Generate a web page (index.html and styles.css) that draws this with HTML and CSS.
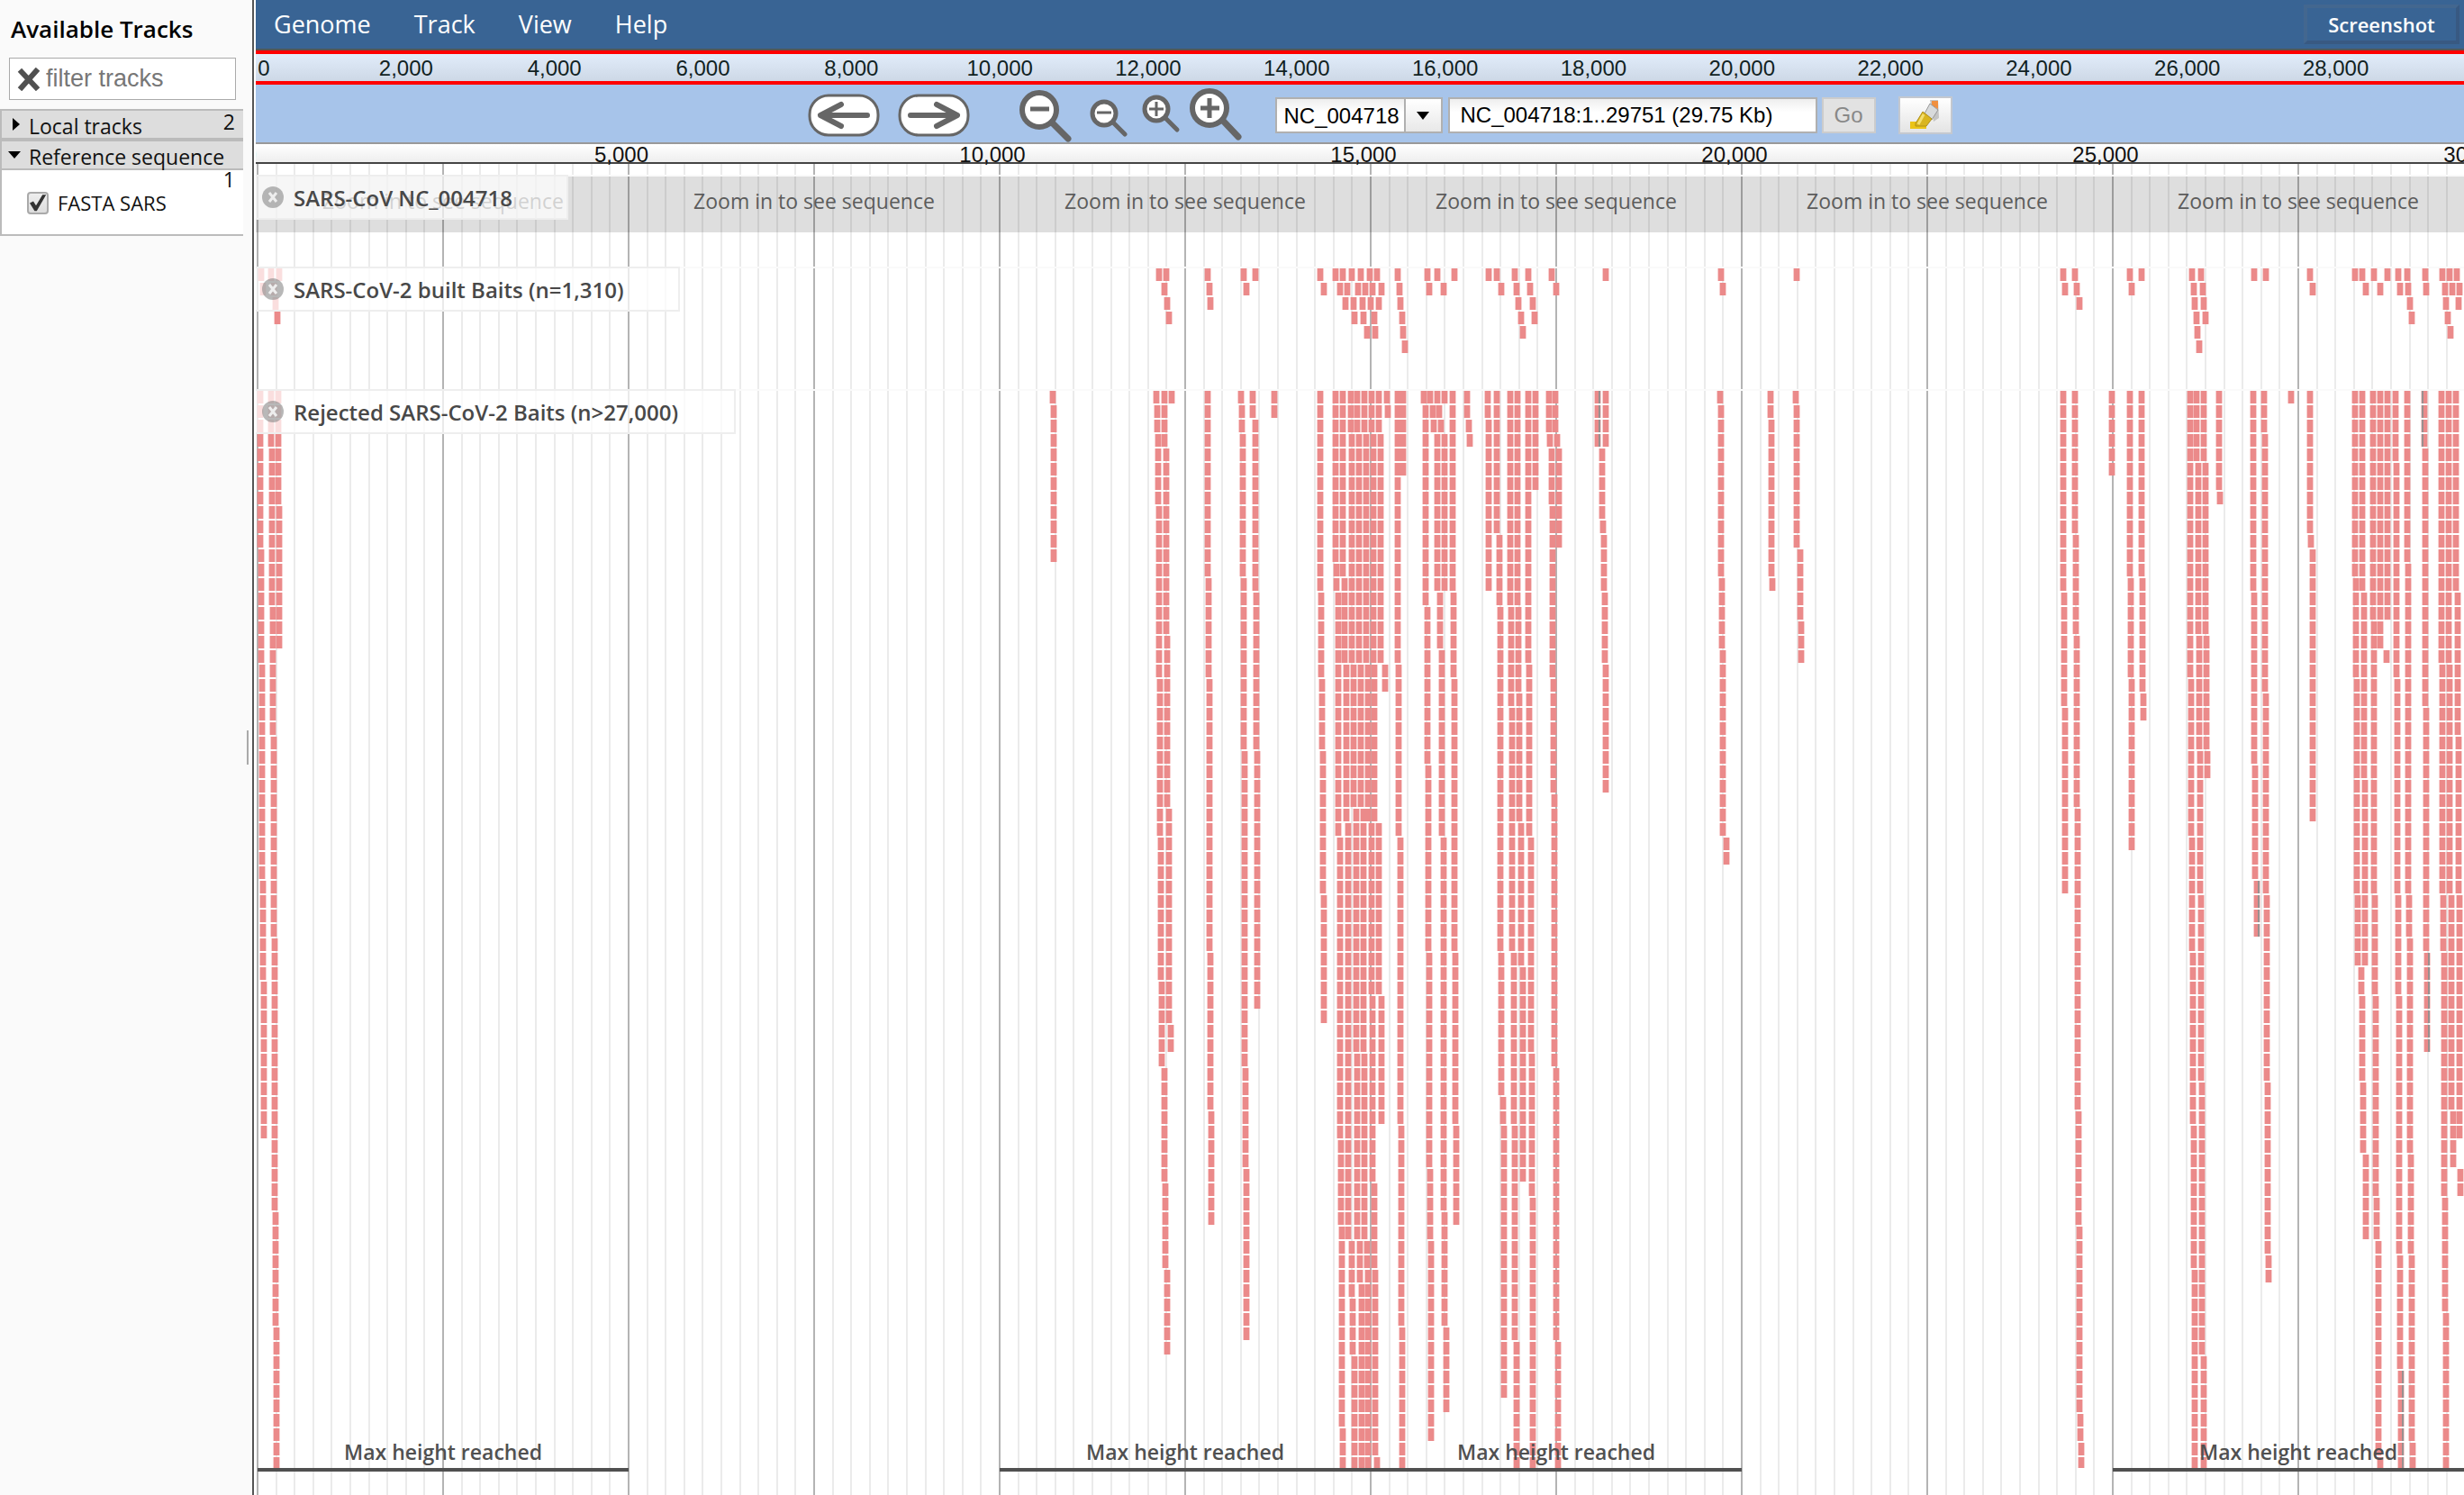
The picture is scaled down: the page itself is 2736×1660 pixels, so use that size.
FILE: index.html
```html
<!DOCTYPE html>
<html lang="en">
<head>
<meta charset="utf-8">
<title>SARS-CoV NC_004718 genome browser</title>
<link rel="stylesheet" href="styles.css">
</head>
<body>
<div class="app">
  <aside class="sidebar">
    <h1 class="sidebar-title">Available Tracks</h1>
    <div class="filter">
      <button class="filter-clear" type="button" aria-label="Clear filter">
        <svg width="26" height="26" viewBox="0 0 26 26" aria-hidden="true"><path d="M5 5 21 22M21 4 5 22" stroke="#505050" stroke-width="6" stroke-linecap="square"/></svg>
      </button>
      <input class="filter-input" type="text" placeholder="filter tracks" aria-label="filter tracks">
    </div>
    <div class="category-list">
      <button class="category" type="button" aria-expanded="false">
        <svg class="twisty" width="10" height="14" viewBox="0 0 10 14" aria-hidden="true"><path d="M1 0 9 7 1 14z"/></svg>
        <span class="category-name">Local tracks</span><span class="category-count">2</span>
      </button>
      <button class="category" type="button" aria-expanded="true">
        <svg class="twisty twisty-open" width="14" height="10" viewBox="0 0 14 10" aria-hidden="true"><path d="M0 1H14L7 9z"/></svg>
        <span class="category-name">Reference sequence</span>
      </button>
      <div class="category-pane">
        <span class="pane-count">1</span>
        <label class="track-option"><input class="tick" type="checkbox" checked><span>FASTA SARS</span></label>
      </div>
    </div>
  </aside>
  <div class="splitter"><span class="splitter-grip"></span></div>
  <main class="browser">
    <nav class="menu-bar">
      <a class="menu-item" href="#genome">Genome</a>
      <a class="menu-item" href="#track">Track</a>
      <a class="menu-item" href="#view">View</a>
      <a class="menu-item" href="#help">Help</a>
      <button class="screenshot" type="button">Screenshot</button>
    </nav>
    <div class="overview">
      <ol class="overview-scale">
        <li class="origin">0</li><li>2,000</li><li>4,000</li><li>6,000</li><li>8,000</li><li>10,000</li><li>12,000</li><li>14,000</li><li>16,000</li><li>18,000</li><li>20,000</li><li>22,000</li><li>24,000</li><li>26,000</li><li>28,000</li>
      </ol>
    </div>
    <div class="toolbar">
      <div class="tools">
        <button class="icon-button" type="button" aria-label="Scroll left"><svg width="80" height="48" viewBox="0 0 80 48"><rect x="2" y="2" width="76" height="44" rx="21" fill="#fff" stroke="#666" stroke-width="3"/><path d="M66 24H16M37 12 14 24 37 36" fill="none" stroke="#666" stroke-width="6" stroke-linecap="round" stroke-linejoin="round"/></svg></button>
        <button class="icon-button" type="button" aria-label="Scroll right"><svg width="80" height="48" viewBox="0 0 80 48"><rect x="2" y="2" width="76" height="44" rx="21" fill="#fff" stroke="#666" stroke-width="3"/><path d="M14 24H64M43 12 66 24 43 36" fill="none" stroke="#666" stroke-width="6" stroke-linecap="round" stroke-linejoin="round"/></svg></button>
      </div>
      <div class="tools zooms">
        <button class="icon-button" type="button" aria-label="Zoom out far"><svg width="62" height="60" viewBox="0 0 62 60"><circle cx="24" cy="24" r="19" fill="#fff" stroke="#666" stroke-width="6"/><path d="M14 23H35" stroke="#666" stroke-width="5"/><path d="M38 38 56 56" stroke="#666" stroke-width="7" stroke-linecap="round"/></svg></button>
        <button class="icon-button" type="button" aria-label="Zoom out"><svg width="44" height="60" viewBox="0 0 44 60"><circle cx="18" cy="28" r="13" fill="#fff" stroke="#666" stroke-width="5"/><path d="M10 27H26" stroke="#666" stroke-width="3"/><path d="M28 38 41 51" stroke="#666" stroke-width="5" stroke-linecap="round"/></svg></button>
        <button class="icon-button" type="button" aria-label="Zoom in"><svg width="44" height="60" viewBox="0 0 44 60"><circle cx="16" cy="23" r="13" fill="#fff" stroke="#666" stroke-width="5"/><path d="M8 23H24M16 15V31" stroke="#666" stroke-width="3"/><path d="M26 33 39 46" stroke="#666" stroke-width="5" stroke-linecap="round"/></svg></button>
        <button class="icon-button" type="button" aria-label="Zoom in far"><svg width="62" height="60" viewBox="0 0 62 60"><circle cx="24" cy="22" r="19" fill="#fff" stroke="#666" stroke-width="6"/><path d="M14 22H35M24 11V33" stroke="#666" stroke-width="5"/><path d="M39 36 56 54" stroke="#666" stroke-width="7" stroke-linecap="round"/></svg></button>
      </div>
      <div class="tools fields">
        <div class="sequence-picker">
          <select class="sequence-select" aria-label="Reference sequence"><option>NC_004718</option></select>
          <span class="picker-arrow" aria-hidden="true"><svg width="14" height="10" viewBox="0 0 14 10"><path d="M0 1H14L7 10z"/></svg></span>
        </div>
        <input class="location" type="text" value="NC_004718:1..29751 (29.75 Kb)" aria-label="Location">
        <button class="go" type="button" disabled>Go</button>
        <button class="highlight" type="button" aria-label="Highlight a region"><svg width="34" height="34" viewBox="0 0 34 34"><path d="M0 24H18V32H0z" fill="#ebc417"/><path d="M22 0H31L32 20 26 24z" fill="#c4c4c4"/><path d="M24 1H31V10L24 6z" fill="#f09040"/><path d="M22 4 31 11 24 22 16 15z" fill="#d8dadb" stroke="#999"/><path d="M14 13 24 21 18 29 6 29 6 26z" fill="#d9b51f" stroke="#b09018"/><path d="M15 16 9 27" stroke="#f3de70" stroke-width="3"/></svg></button>
      </div>
    </div>
    <div class="ruler">
      <ol class="ruler-scale"><li>0</li><li>5,000</li><li>10,000</li><li>15,000</li><li>20,000</li><li>25,000</li><li>30,000</li></ol>
    </div>
    <div class="tracks">
      <svg class="gridlines" id="gridlines" aria-hidden="true"></svg>
      <section class="track track-sequence">
        <div class="blocks sequence-blocks">
          <span>Zoom in to see sequence</span><span>Zoom in to see sequence</span><span>Zoom in to see sequence</span><span>Zoom in to see sequence</span><span>Zoom in to see sequence</span><span>Zoom in to see sequence</span>
        </div>
        <h2 class="track-label label-sequence"><button class="close" type="button" aria-label="Close track"><svg width="24" height="24" viewBox="0 0 24 24"><circle cx="12" cy="12" r="12"/><path d="M8 7 16 17M16 7 8 17"/></svg></button>SARS-CoV NC_004718</h2>
      </section>
      <section class="track track-built">
        <svg class="chart" id="built" viewBox="0 0 2452 96" preserveAspectRatio="none" aria-hidden="true"></svg>
        <h2 class="track-label label-built"><button class="close" type="button" aria-label="Close track"><svg width="24" height="24" viewBox="0 0 24 24"><circle cx="12" cy="12" r="12"/><path d="M8 7 16 17M16 7 8 17"/></svg></button>SARS-CoV-2 built Baits (n=1,310)</h2>
      </section>
      <section class="track track-rejected">
        <svg class="chart chart-tall" id="rejected" viewBox="0 0 2452 1196" preserveAspectRatio="none" aria-hidden="true"></svg>
        <div class="blocks limits">
          <span class="full">Max height reached</span><span></span><span class="full">Max height reached</span><span class="full">Max height reached</span><span></span><span class="full">Max height reached</span>
        </div>
        <h2 class="track-label label-rejected"><button class="close" type="button" aria-label="Close track"><svg width="24" height="24" viewBox="0 0 24 24"><circle cx="12" cy="12" r="12"/><path d="M8 7 16 17M16 7 8 17"/></svg></button>Rejected SARS-CoV-2 Baits (n&gt;27,000)</h2>
      </section>
    </div>
  </main>
</div>
<script src="tracks.js"></script>
</body>
</html>
```
FILE: styles.css
```css
* { box-sizing: border-box; }
body {
  margin: 0;
  background: #fff;
  color: #111;
  font-family: "Open Sans", "Noto Sans", sans-serif;
  font-size: 23px;
}
button, input, select { font: inherit; color: inherit; margin: 0; }
button { padding: 0; border: 0; background: none; }
ol { list-style: none; margin: 0; padding: 0; }
svg { display: block; }

.app { display: flex; min-height: 100vh; }

/* Track selector */
.sidebar { flex: 0 0 270px; background: #fafafa; }
.sidebar-title {
  margin: 0;
  padding: 16px 0 0 12px;
  height: 64px;
  font-size: 26px;
  line-height: 32px;
  font-weight: 600;
  color: #000;
  white-space: nowrap;
}
.filter {
  display: flex;
  align-items: center;
  height: 47px;
  margin: 0 8px 10px 10px;
  padding-left: 8px;
  background: #fff;
  border: 1px solid #aaa;
}
.filter-input {
  width: 100%;
  border: 0;
  padding: 0 0 0 6px;
  background: none;
  font-family: "Liberation Sans", Arial, sans-serif;
  font-size: 27px;
}
.filter-input::placeholder { color: #777; }
.category-list { border: 2px solid #bbb; border-right: 0; }
.category {
  display: flex;
  align-items: flex-start;
  width: 100%;
  height: 34px;
  background: #ddd;
  border-bottom: 4px solid #bbb;
  text-align: left;
  line-height: 24px;
  white-space: nowrap;
}
.category + .category { height: 32px; border-bottom-width: 2px; }
.twisty { flex: none; margin: 8px 9px 0 11px; }
.twisty-open { margin: 10px 9px 0 7px; }
.category-name { flex: 1; padding-top: 5px; }
.category-count { padding-right: 9px; }
.category-pane { height: 71px; background: #fff; padding-right: 9px; }
.pane-count { display: block; text-align: right; line-height: 20px; }
.track-option { display: flex; align-items: center; gap: 10px; margin-left: 28px; font-size: 22px; line-height: 32px; }
.tick {
  appearance: none;
  width: 24px;
  height: 25px;
  border: 2px solid #aaa;
  border-radius: 4px;
  background: linear-gradient(#eee, #ddd);
  display: grid;
  place-items: center;
}
.tick::before {
  content: "";
  width: 20px;
  height: 20px;
  background: #333;
  clip-path: polygon(5% 52%, 25% 42%, 40% 66%, 76% 6%, 96% 6%, 44% 96%, 32% 96%);
}

.splitter {
  flex: 0 0 14px;
  display: flex;
  align-items: center;
  padding-left: 4px;
  border-right: 2px solid #fff;
  background: linear-gradient(to left, #555 2px, #fafafa 2px);
}
.splitter-grip { width: 2px; height: 38px; background: #aaa; }

/* Menu, overview and toolbar */
.browser { flex: 1; min-width: 0; display: flex; flex-direction: column; }
.menu-bar {
  display: flex;
  align-items: center;
  gap: 48px;
  height: 56px;
  padding: 0 5px 0 20px;
  background: #396494;
  border-bottom: 2px solid #555;
}
.menu-item { color: #fff; font-size: 27px; line-height: 36px; text-decoration: none; }
.screenshot {
  margin-left: auto;
  width: 173px;
  height: 44px;
  border: 4px solid;
  border-color: #43678f #385982 #385982 #43678f;
  color: #fff;
  font-weight: 600;
  font-size: 22px;
}
.overview {
  height: 38px;
  border: solid #f00;
  border-width: 4px 0;
  background: linear-gradient(#e1ecfa, #cdd8e6);
  overflow: hidden;
}
.overview-scale, .ruler-scale {
  display: flex;
  width: 100%;
  font-family: "Liberation Sans", Arial, sans-serif;
  font-size: 24px;
  text-align: center;
}
.overview-scale { margin-left: calc(50% * -2000 / 29751 + 2px); line-height: 32px; color: #122; }
.overview-scale li { flex: 0 0 calc(100% * 2000 / 29751); }
.overview-scale .origin { padding-left: 14px; }
.toolbar {
  display: flex;
  align-items: center;
  justify-content: center;
  height: 66px;
  padding: 4px 0 0 44px;
  background: #a7c4ea;
  border-bottom: 2px solid #999;
}
.tools { display: flex; align-items: center; }
.tools:first-child { gap: 20px; }
.zooms { margin: 0 35px 0 53px; gap: 16px; }
.zooms .icon-button:last-child { margin-left: -9px; }
.fields { font-family: "Liberation Sans", Arial, sans-serif; font-size: 24px; color: #000; }
.sequence-picker { display: grid; width: 186px; height: 40px; margin-right: 6px; }
.sequence-select, .picker-arrow { grid-area: 1 / 1; }
.sequence-select {
  appearance: none;
  width: 100%;
  border: 2px solid #b0b0b0;
  border-radius: 0;
  padding: 0 0 0 8px;
  background: linear-gradient(#eee, #fff 40%);
}
.picker-arrow {
  justify-self: end;
  display: grid;
  place-items: center;
  width: 43px;
  border: 2px solid #b0b0b0;
  background: linear-gradient(#fff, #e8e8e8);
  pointer-events: none;
}
.location {
  width: 410px;
  height: 40px;
  margin-right: 5px;
  border: 2px solid #b0b0b0;
  padding: 0 12px;
  background: linear-gradient(#eee, #fff 40%);
}
.go { width: 60px; height: 40px; background: #e2e2e2; border: 2px solid #ccc; color: #888; }
.highlight { display: grid; place-items: center; width: 60px; height: 42px; margin-left: 25px; border: 2px solid #c4c8cf; background: linear-gradient(#fff, #e4e4e4); }
.ruler {
  height: 22px;
  border-bottom: 2px solid #444;
  background: linear-gradient(#fff, #eee);
  overflow-x: clip;
}
.ruler-scale { position: relative; z-index: 1; margin-left: calc(50% * -5000 / 29757 - 6px); line-height: 24px; }
.ruler-scale li { flex: 0 0 calc(100% * 5000 / 29757); }

/* Tracks */
.tracks { position: relative; flex: 1; padding-top: 12px; overflow: hidden; }
.gridlines { position: absolute; left: 0; top: 0; width: 100%; height: 100%; }
.gridlines .minor { fill: #ebebeb; }
.gridlines .major { fill: #b4b4b4; }
.track { position: relative; border-top: 2px solid #fafafa; }
.track-sequence { height: 102px; }
.track-built { height: 136px; }
.track-rejected { display: grid; }
.blocks { display: flex; overflow: hidden; padding-left: 2px; text-align: center; white-space: nowrap; }
.blocks span { flex: 0 0 calc(100% * 5000 / 29733); }
.sequence-blocks { height: 62px; background: rgba(0, 0, 0, 0.13); color: #5c5c5c; line-height: 54px; }
.chart { width: 100%; height: 96px; }
.chart-tall { grid-area: 1 / 1; height: 1196px; }
.chart .halo { fill: #eb8a8a; fill-opacity: 0.4; }
.chart .bait { fill: #eb8a8a; }
.chart .marked { fill: #999090; }
.limits { grid-area: 1 / 1; align-self: end; margin-bottom: -4px; color: #505050; font-weight: 600; line-height: 36px; }
.limits .full { border-bottom: 4px solid #505050; }
.track-label {
  position: absolute;
  left: 0;
  top: -2px;
  display: flex;
  align-items: center;
  gap: 11px;
  height: 50px;
  margin: 0;
  padding-left: 7px;
  border: 2px solid #eee;
  border-left: 0;
  background: rgba(255, 255, 255, 0.72);
  color: #484848;
  font-size: 24px;
  font-weight: 600;
  white-space: nowrap;
}
.label-sequence { width: 347px; }
.label-built { width: 471px; }
.label-rejected { width: 533px; }
.close { fill: #888; fill-opacity: 0.6; stroke: #eee; stroke-width: 3; }
.close circle { stroke: none; }
```
FILE: tracks.js
```js
const NS = "http://www.w3.org/2000/svg";
const VIEW_LEFT = 284;
const ROW = 16;
const BAIT_HEIGHT = 14;

function rect(parent, cls, x, y, width, height) {
  const r = document.createElementNS(NS, "rect");
  const box = { class: cls, x, y, width, height };
  for (const key in box) r.setAttribute(key, box[key]);
  parent.appendChild(r);
}

// Vertical lines every 250 bases, stronger every 2,500.
const grid = document.getElementById("gridlines");
for (let i = 0; i < 120; i++) {
  const x = (Math.round(1 + i * 20.6) / 2452) * 100 + "%";
  rect(grid, i % 10 ? "minor" : "major", x, 0, 2, "100%");
}

function bait(chart, x, row, mark) {
  const left = x - VIEW_LEFT;
  const top = row * ROW;
  rect(chart, "halo", left, top, 8, BAIT_HEIGHT);
  rect(chart, "bait", left + 1, top, 6, BAIT_HEIGHT);
  if (mark === "r") rect(chart, "marked", left + 5, top, 2, BAIT_HEIGHT);
  if (mark === "l") rect(chart, "marked", left + 1, top, 2, BAIT_HEIGHT);
}

// Built baits: one list of positions for each row.
const builtRows = [
  "286 297 306 1283 1291 1337 1377 1390 1462 1479 1487 1497 1507 1517 1525 1548 1581 1592 1611 1649 1658 1678 1693 1719 1779 1907 1991 2287 2300 2361 2374 2430 2440 2499 2512 2561 2611 2619 2632 2647 2659 2669 2689 2708 2716 2724",
  "288 300 1289 1339 1380 1466 1484 1492 1504 1512 1520 1530 1550 1583 1599 1663 1680 1695 1724 1909 2289 2302 2363 2432 2442 2564 2623 2639 2661 2670 2690 2711 2719 2727",
  "302 1292 1340 1490 1499 1509 1518 1527 1551 1682 1698 2305 2433 2443 2672 2712 2726",
  "304 1294 1500 1510 1522 1553 1685 1700 2435 2445 2674 2714",
  "1514 1523 1554 1687 2436 2717",
  "1556 2438"
];
const built = document.getElementById("built");
builtRows.forEach((line, row) => line.split(" ").forEach(x => bait(built, +x, row)));

// Rejected baits: stacks given as position@firstRow-lastRow; r or l marks a strand edge.
const rejectedStacks = `
285@0-10 286@11-18 287@19-33 288@34-40 289@41-51
297@0-3 298@4-14 299@15-23 300@24-37 301@38-56 302@57-64 303@65-74
305@0-7 306@8-17
1165@0-0 1166@1-11
1280@0-0 1281@1-2 1282@3-7 1283@8-19 1284@20-30 1285@31-40 1286@41-46 1289@47-54 1290@55-60 1292@61-66
1289@0-3 1291@4-16 1292@17-28 1294@29-43 1296@44-45 1297@0-0
1337@0-12 1338@13-19 1339@20-38 1340@39-49 1341@50-57
1374@0-0 1375@1-2 1376@3-12 1377@13-24 1378@25-46 1379@47-53 1380@54-65
1387@0-1 1390@2-13 1391@14-24 1392@25-42
1411@0-1
1462@0-13 1463@14-19 1464@20-24 1465@25-34 1466@35-43
1479@0-11 1480@12-13 1482@14-30 1484@31-51 1485@52-57 1486@58-71 1487@72-74
1487@0-12 1489@13-18 1491@19-29 1493@30-58 1497@59-62 1498@63-66 1500@67-74
1496@0-2 1497@3-18 1499@19-28 1502@29-45 1503@46-58 1506@59-61 1508@62-74
1503@0-2 1505@3-18 1507@19-28 1510@29-45 1511@46-58 1514@59-60 1515@61-74
1511@0-2 1513@3-18 1515@19-29 1519@30-41 1520@42-54 1522@55-60 1523@61-73 1525@74-74
1519@0-2 1521@3-18 1522@19-29 1527@30-41 1530@42-50
1527@0-2 1529@3-18 1534@19-20 1536@0-0 1537@1-1
1548@0-18 1549@19-30 1551@31-50 1552@51-64 1553@65-74
1554@0-5
1577@0-0 1579@1-14 1581@15-25 1582@26-38 1583@39-53 1584@54-58 1585@59-72
1584@0-0 1587@1-1 1588@2-2
1592@0-0 1594@1-1 1596@2-2 1592@3-13 1595@14-17 1597@18-30 1599@31-56 1600@57-64 1602@65-70
1600@0-0 1600@3-13
1609@0-13 1610@14-19 1611@20-38 1612@39-50 1613@51-57
1625@0-1 1627@2-2 1628@3-3
1648@0-1 1649@2-13
1658@0-9 1661@10-14 1662@15-38 1663@39-48 1665@49-50 1666@51-69
1673@0-14 1674@15-21 1675@22-38 1677@39-50 1678@51-65 1680@66-74
1681@0-14 1682@15-20 1683@21-29 1685@30-39 1687@40-54
1693@0-18 1694@19-30 1696@31-45 1697@46-55 1698@56-74
1701@0-6
1716@0-2 1717@3-3 1719@4-7 1720@8-19 1721@20-27 1722@28-46 1724@47-65 1726@66-74
1723@0-2 1725@3-3 1727@4-10
1770@0-3r 1775@4-8 1776@9-9 1777@10-13 1778@14-18 1779@19-27
1779@0-3
1906@0-0 1907@1-12 1908@13-17 1909@18-30 1913@31-32
1962@0-1 1963@2-12 1964@13-13
1990@0-0 1991@1-10 1995@11-15 1996@16-18
2287@0-13 2288@14-21 2289@22-34
2300@0-9 2301@10-16 2302@17-28 2303@29-49 2304@50-57 2305@58-70 2306@71-72 2307@73-74
2341@0-5
2361@0-12 2362@13-19 2363@20-31
2374@0-12 2375@13-20 2376@21-22
2428@0-19 2429@20-30 2430@31-38 2431@39-50 2432@51-60 2433@61-74
2435@0-4 2437@5-16 2438@17-24 2439@25-34 2440@35-47 2441@48-66 2443@67-74
2443@0-4 2445@5-16 2446@17-24 2447@25-26
2460@0-6 2461@7-7
2498@0-13 2499@14-25 2500@26-33 2502@34-37r
2510@0-2 2511@3-20 2512@21-34 2513@35-47 2514@48-59 2515@60-61
2540@0-0
2561@0-9 2562@10-10 2564@11-29
2611@0-12 2612@13-19 2613@20-34 2614@35-39 2618@40-41 2619@42-47 2620@48-52 2623@53-58
2619@0-13 2621@14-26 2622@27-39
2631@0-15 2632@16-34 2633@35-41 2634@42-55 2635@56-58 2637@59-73 2639@74-74
2639@0-17
2647@0-15 2646@18-18
2656@0-4 2657@5-19 2658@20-34 2659@35-41 2660@42-59 2661@60-67 2662@68-74r
2669@0-11 2670@12-34 2671@35-37 2672@38-52 2673@53-59 2674@60-72 2675@73-74
2688@0-3l 2689@4-21 2690@22-38 2691@39-45r
2707@0-18 2708@19-34 2709@35-38 2710@39-55 2711@56-63 2712@64-74
2715@0-18 2716@19-34 2718@35-49 2720@50-53
2723@0-13 2725@14-23 2726@24-34 2727@35-51 2728@54-55`;
const rejected = document.getElementById("rejected");
for (const stack of rejectedStacks.trim().split(/\s+/)) {
  const [, x, first, last, mark] = stack.match(/^(\d+)@(\d+)-(\d+)([rl]?)$/);
  for (let row = +first; row <= +last; row++) bait(rejected, +x, row, mark);
}
```
